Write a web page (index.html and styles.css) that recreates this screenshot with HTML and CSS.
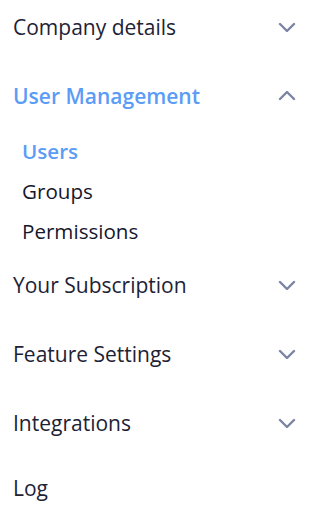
FILE: index.html
```html
<!DOCTYPE html>
<html lang="en">
<head>
    <meta charset="UTF-8">
    <meta name="viewport" content="width=device-width, initial-scale=1.0">
    <title>Settings</title>
    <link rel="stylesheet" href="styles.css">
</head>
<body>
    <nav class="settings-nav">
        <div class="nav-section">
            <div class="nav-header">
                <span class="nav-title">Company details</span>
                <span class="chevron">
                    <svg width="18" height="10" viewBox="0 0 18 10"><path d="M2 2l7 7 7-7"/></svg>
                </span>
            </div>
        </div>

        <div class="nav-section open">
            <div class="nav-header">
                <span class="nav-title">User Management</span>
                <span class="chevron">
                    <svg width="18" height="10" viewBox="0 0 18 10"><path d="M2 8l7-7 7 7"/></svg>
                </span>
            </div>
            <ul class="sub-menu">
                <li class="sub-item active">Users</li>
                <li class="sub-item">Groups</li>
                <li class="sub-item">Permissions</li>
            </ul>
        </div>

        <div class="nav-section">
            <div class="nav-header">
                <span class="nav-title">Your Subscription</span>
                <span class="chevron">
                    <svg width="18" height="10" viewBox="0 0 18 10"><path d="M2 2l7 7 7-7"/></svg>
                </span>
            </div>
        </div>

        <div class="nav-section">
            <div class="nav-header">
                <span class="nav-title">Feature Settings</span>
                <span class="chevron">
                    <svg width="18" height="10" viewBox="0 0 18 10"><path d="M2 2l7 7 7-7"/></svg>
                </span>
            </div>
        </div>

        <div class="nav-section">
            <div class="nav-header">
                <span class="nav-title">Integrations</span>
                <span class="chevron">
                    <svg width="18" height="10" viewBox="0 0 18 10"><path d="M2 2l7 7 7-7"/></svg>
                </span>
            </div>
        </div>

        <div class="nav-section">
            <div class="nav-header">
                <span class="nav-title">Log</span>
            </div>
        </div>
    </nav>
</body>
</html>
```

FILE: styles.css
```css
:root {
    --text-color: #1e2235;
    --accent-color: #5b9cf6;
    --icon-color: #7b84a2;
}

* {
    margin: 0;
    padding: 0;
    box-sizing: border-box;
}

body {
    font-family: 'Open Sans', 'Noto Sans', sans-serif;
    background: #ffffff;
    color: var(--text-color);
    -webkit-font-smoothing: antialiased;
}

.settings-nav {
    display: flex;
    flex-direction: column;
    gap: 15px;
    width: 326px;
}

.nav-header {
    display: flex;
    align-items: center;
    justify-content: space-between;
    padding: 9px 21px 9px 13px;
    cursor: pointer;
}

.nav-title {
    font-size: 21px;
    line-height: 28px;
}

.open .nav-title {
    color: var(--accent-color);
    font-weight: 600;
}

.chevron {
    width: 36px;
    height: 36px;
    display: flex;
    align-items: center;
    justify-content: center;
}

.chevron svg path {
    fill: none;
    stroke: var(--icon-color);
    stroke-width: 2.4;
    stroke-linecap: round;
    stroke-linejoin: round;
}

.sub-menu {
    list-style: none;
    margin: 8px 0 -8px;
}

.sub-item {
    font-size: 20.6px;
    line-height: 40px;
    padding-left: 22px;
    color: #15172a;
    cursor: pointer;
}

.sub-item.active {
    color: var(--accent-color);
    font-weight: 600;
}
```
